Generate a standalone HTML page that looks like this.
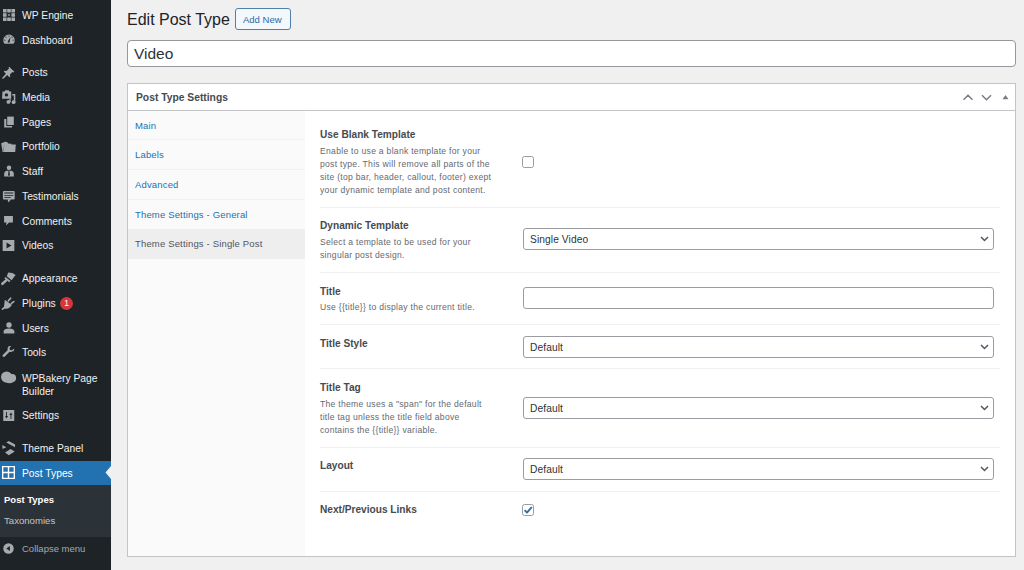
<!DOCTYPE html>
<html><head><meta charset="utf-8">
<style>
*{box-sizing:border-box;margin:0;padding:0}
html,body{width:1024px;height:570px;overflow:hidden;background:#f0f0f1;font-family:"Liberation Sans",sans-serif;color:#3c434a}
.abs{position:absolute}
#side{position:absolute;left:0;top:0;width:111px;height:570px;background:#1d2327}
.mi{position:absolute;left:22px;font-size:10.3px;color:#f0f0f1;white-space:nowrap;line-height:12px}
.ic{position:absolute;left:3px;width:12px;height:12px}
#cur{position:absolute;left:0;top:461px;width:111px;height:24px;background:#2271b1}
#sub{position:absolute;left:0;top:485px;width:111px;height:52px;background:#2c3338}
.t{position:absolute;white-space:nowrap}
.h{font-size:10.15px;line-height:12px;font-weight:bold;color:#454b51}
.cb{position:absolute;left:522px;width:12px;height:12px;border:1px solid #9a9ca1;border-radius:2.5px;background:#fff}
.d{font-size:8.6px;color:#646970;line-height:13px;letter-spacing:0.28px}
.tab{position:absolute;left:135px;font-size:9.5px;letter-spacing:0.16px;color:#2271b1;white-space:nowrap}
.sep{position:absolute;left:320px;width:680px;height:1px;background:#f2f2f3}
.sel{position:absolute;left:523px;width:471px;height:22px;border:1px solid #9a9ca1;border-radius:3px;background:#fff}
.sel span{position:absolute;left:6px;top:5px;font-size:10.2px;line-height:11px;letter-spacing:0.1px;color:#2c3338}
.sel svg{position:absolute;left:455.5px;top:7px}
</style></head><body>
<div id="side">
<svg class="abs" style="left:3px;top:9px" width="12" height="12" viewBox="0 0 20 20" fill="#a7aaad"><path d="M0 0h6v6H0zM7 0h6v6H7zM14 0h6v6h-6zM0 7h6v6H0zM14 7h6v6h-6zM0 14h6v6H0zM7 14h6v6H7zM14 14h6v6h-6z"/><path d="M10 7.3l.9 1.8 1.8.9-1.8.9-.9 1.8-.9-1.8-1.8-.9 1.8-.9z"/></svg>
<svg class="abs" style="left:3px;top:33px" width="12" height="12" viewBox="0 0 20 20" fill="#a7aaad"><path d="M10 2.5A9.5 9.5 0 0 0 .5 12c0 2.2.7 4.2 2 5.8h15c1.3-1.6 2-3.6 2-5.8A9.5 9.5 0 0 0 10 2.5z"/><g fill="#1d2327"><circle cx="10" cy="5" r="1"/><circle cx="5" cy="7" r="1"/><circle cx="15" cy="7" r="1"/><circle cx="3.2" cy="12" r="1"/><circle cx="16.8" cy="12" r="1"/><path d="M12.5 6.5l-1.2 7.2a1.8 1.8 0 1 1-2.8-.9z"/></g></svg>
<svg class="abs" style="left:2px;top:66px" width="13" height="13" viewBox="0 0 20 20" fill="#a7aaad"><path d="M11 1l8 8-1.5 1-1.5-.8-3.8 3.8.5 3-1.4 1.3-3.2-3.3L2 19.5H.5V18l5.5-6.2L2.7 8.5 4 7.2l3 .5 3.8-3.8L10 2.4z"/></svg>
<svg class="abs" style="left:0px;top:86px" width="20" height="20" viewBox="0 0 20 20" fill="#a7aaad"><path d="M2.5 5.5h2l.8-1.2h3.4l.8 1.2h1.7v7.3H2z"/><circle cx="6.4" cy="8.9" r="1.7" fill="#1d2327"/><path d="M12.3 8h3v8.3h-1.5V9.4h-1.5z"/><circle cx="13.6" cy="16.2" r="1.9"/><circle cx="8.4" cy="15.9" r="1.9"/><path d="M9.4 13h1.3v3h-1.3z"/></svg>
<svg class="abs" style="left:3px;top:116px" width="12" height="12" viewBox="0 0 20 20" fill="#a7aaad"><path d="M7 1h11v14H7z"/><path d="M2 5h3.5v11.5H15V19H2z"/></svg>
<svg class="abs" style="left:0px;top:136px" width="20" height="20" viewBox="0 0 20 20" fill="#a7aaad"><path d="M1.2 7.3L5.2 5.8l2.4.4.3 1.4 3.6.2v1.2L4.2 9l-1.2 7h-.4z"/><path d="M4.4 8.6h11.4l-.6 7.4H3.1z"/></svg>
<svg class="abs" style="left:3px;top:165px" width="12" height="12" viewBox="0 0 20 20" fill="#a7aaad"><circle cx="10" cy="4.5" r="3.8"/><path d="M2 19v-4.5C2 11 4.5 9.5 7 9.5h6c2.5 0 5 1.5 5 5V19z"/><path d="M9.2 10h1.6l.8 7-1.6 1.5L8.4 17z" fill="#1d2327"/></svg>
<svg class="abs" style="left:0px;top:190px" width="20" height="20" viewBox="0 0 20 20" fill="#a7aaad"><rect x="2.9" y="1" width="11.8" height="8.4" rx="1"/><path d="M7.6 9.2h3.6l-2.9 3.4z"/><path d="M4.3 2.6h9v.9h-9zM4.3 4.9h9v.9h-9zM4.3 7.2h6.5v.9H4.3z" fill="#1d2327"/></svg>
<svg class="abs" style="left:3px;top:214px" width="11" height="13" viewBox="0 0 20 20" fill="#a7aaad"><path d="M2 2h16v11.5h-7l-5.5 5.5.8-5.5H2z"/></svg>
<svg class="abs" style="left:2px;top:239px" width="13" height="13" viewBox="0 0 20 20" fill="#a7aaad"><path d="M1 1.5h18v17H1z"/><path d="M7 5.5l7.5 4.5L7 14.5z" fill="#1d2327"/></svg>
<svg class="abs" style="left:0px;top:268px" width="20" height="20" viewBox="0 0 20 20" fill="#a7aaad"><path d="M8.2 4.6l4.2.3 3.2 2.2-4 5.2-4.8-4z"/><path d="M5.6 8.9l4.9 4-1.3 1.4-4.9-4z"/><path d="M6.2 12.4L2.4 15.8" stroke="#a7aaad" stroke-width="2.6" stroke-linecap="round"/></svg>
<svg class="abs" style="left:0px;top:296px" width="20" height="20" viewBox="0 0 20 20" fill="#a7aaad"><path d="M4.8 3.8l7.2 5.2-2.6 2.8c-1.6 1-3.6 1-5.6.6z"/><path d="M8.4 4.8l2.2-2.6M11.4 7.4l2.4-1.8" stroke="#a7aaad" stroke-width="1.7" stroke-linecap="round"/><path d="M4.2 11.6l-1.7 1.6" stroke="#a7aaad" stroke-width="1.6" stroke-linecap="round"/></svg>
<svg class="abs" style="left:3px;top:322px" width="12" height="12" viewBox="0 0 20 20" fill="#a7aaad"><circle cx="10" cy="5" r="4.5"/><path d="M1 19v-3c0-3 3.5-5 9-5s9 2 9 5v3z"/></svg>
<svg class="abs" style="left:2px;top:346px" width="13" height="13" viewBox="0 0 20 20" fill="#a7aaad"><path d="M16.7 7.7c-1.4 1.4-3.4 1.8-5.1 1.2L4 16.5a2 2 0 0 1-2.8-2.8l7.6-7.6c-.6-1.8-.2-3.8 1.2-5.2 1.3-1.3 3.1-1.7 4.7-1.3L11.6 2.8l.6 3.3 3.3.6 3-3c.4 1.6 0 3.5-1.8 5z"/></svg>
<svg class="abs" style="left:0px;top:364px" width="20" height="24" viewBox="0 0 20 24" fill="#a7aaad"><circle cx="6.6" cy="13" r="5.6"/><circle cx="12.2" cy="13.9" r="3.9"/><ellipse cx="9.5" cy="16" rx="5" ry="3.2"/></svg>
<svg class="abs" style="left:3px;top:410px" width="11.5" height="11" viewBox="0 0 20 20" fill="#a7aaad"><path d="M0 0h20v20H0z"/><path d="M5.2 3.5h1.6V11h2L6 15.5 3.2 11h2zM13.2 16.5h1.6V9h2L14 4.5 11.2 9h2z" fill="#1d2327"/></svg>
<svg class="abs" style="left:0px;top:436px" width="20" height="20" viewBox="0 0 20 20" fill="#a7aaad"><path d="M6.3 6.5L8.6 5l6.5 3.6-.1 2.6z"/><path d="M2.3 9l4 2.2-3.8 1.8z"/><path d="M5 16.6L10.5 13l4.2 2.6-5.9 3.6z"/></svg>
  <div class="mi" style="top:10px">WP Engine</div>
  <div class="mi" style="top:35px">Dashboard</div>
  <div class="mi" style="top:67px">Posts</div>
  <div class="mi" style="top:92px">Media</div>
  <div class="mi" style="top:117px">Pages</div>
  <div class="mi" style="top:141px">Portfolio</div>
  <div class="mi" style="top:166px">Staff</div>
  <div class="mi" style="top:191px">Testimonials</div>
  <div class="mi" style="top:216px">Comments</div>
  <div class="mi" style="top:240px">Videos</div>
  <div class="mi" style="top:273px">Appearance</div>
  <div class="mi" style="top:298px">Plugins</div>
  <div class="abs" style="left:60px;top:297px;width:13px;height:13px;border-radius:50%;background:#d63638;color:#fff;font-size:8.5px;text-align:center;line-height:13px">1</div>
  <div class="mi" style="top:323px">Users</div>
  <div class="mi" style="top:347px">Tools</div>
  <div class="mi" style="top:372px;line-height:13px">WPBakery Page<br>Builder</div>
  <div class="mi" style="top:410px">Settings</div>
  <div class="mi" style="top:443px">Theme Panel</div>
  <div id="cur"></div>
<svg class="abs" style="left:2px;top:466px" width="13" height="13" viewBox="0 0 20 20" fill="none"><path d="M1 1h18v18H1z" fill="none" stroke="#fff" stroke-width="2.2"/><path d="M10 1v18M1 10h18" stroke="#fff" stroke-width="2.2"/></svg>
  <div class="mi" style="top:468px;color:#fff">Post Types</div>
  <svg class="abs" style="left:105px;top:466px" width="6" height="13" viewBox="0 0 6 13"><path d="M6 0L0.5 6.5 6 13z" fill="#f0f0f1"/></svg>
  <div id="sub"></div>
  <div class="mi" style="top:494px;left:4px;font-size:9.5px;font-weight:bold;color:#fff">Post Types</div>
  <div class="mi" style="top:515px;left:4px;font-size:9.6px;color:#c3c4c7">Taxonomies</div>
<svg class="abs" style="left:3px;top:543px" width="11" height="11" viewBox="0 0 20 20" fill="#a7aaad"><circle cx="10" cy="10" r="9.5"/><path d="M12.5 5.5v9L6 10z" fill="#1d2327"/></svg>
  <div class="mi" style="top:543px;font-size:9.5px;color:#a7aaad">Collapse menu</div>
</div>

<div class="t" style="left:127px;top:11px;font-size:16px;line-height:18px;color:#1d2327">Edit Post Type</div>
<div class="abs" style="left:235px;top:8px;width:56px;height:22px;border:1px solid #4f80aa;border-radius:3px;background:#f3f8fc"></div>
<div class="t" style="left:243px;top:13.5px;font-size:9.5px;line-height:11px;color:#2a6aa3">Add New</div>

<div class="abs" style="left:127px;top:40px;width:889px;height:27px;border:1px solid #94979c;border-radius:4px;background:#fff"></div>
<div class="t" style="left:134px;top:45px;font-size:15.5px;line-height:18px;color:#2c3338">Video</div>

<div class="abs" style="left:127px;top:83px;width:889px;height:474px;border:1px solid #c3c4c7;background:#fff"></div>
<div class="abs" style="left:128px;top:110px;width:887px;height:1px;background:#c3c4c7"></div>
<div class="abs" style="left:128px;top:111px;width:177px;height:445px;background:#fafafa"></div>
<div class="abs" style="left:128px;top:139px;width:177px;height:1px;background:#f0f0f0"></div>
<div class="abs" style="left:128px;top:169px;width:177px;height:1px;background:#f0f0f0"></div>
<div class="abs" style="left:128px;top:199px;width:177px;height:1px;background:#f0f0f0"></div>
<div class="t h" style="left:136px;top:92px;font-size:10.3px">Post Type Settings</div>
<svg class="abs" style="left:962px;top:92px" width="48" height="10" viewBox="0 0 48 10" fill="none" stroke="#787c82" stroke-width="1.5"><path d="M1.5 7.8L6 3.3l4.5 4.5M20 3.3l4.5 4.5L29 3.3"/><path d="M40.5 7.2l3-4.2 3 4.2z" fill="#787c82" stroke="none"/></svg>

<div class="tab" style="top:120px">Main</div>
<div class="tab" style="top:149px">Labels</div>
<div class="tab" style="top:179px">Advanced</div>
<div class="tab" style="top:209px">Theme Settings - General</div>
<div class="abs" style="left:128px;top:229px;width:177px;height:30px;background:#eeeeee"></div>
<div class="tab" style="top:238px;color:#50575e">Theme Settings - Single Post</div>

<div class="t h" style="left:320px;top:129px">Use Blank Template</div>
<div class="t d" style="left:320px;top:145px">Enable to use a blank template for your<br>post type. This will remove all parts of the<br>site (top bar, header, callout, footer) exept<br>your dynamic template and post content.</div>
<div class="cb" style="top:156px"></div>
<div class="sep" style="top:207px"></div>

<div class="t h" style="left:320px;top:220px">Dynamic Template</div>
<div class="t d" style="left:320px;top:236px">Select a template to be used for your<br>singular post design.</div>
<div class="sel" style="top:228px"><span>Single Video</span><svg width="9" height="6" viewBox="0 0 9 6" fill="none" stroke="#50575e" stroke-width="1.5"><path d="M1 1l3.5 3.5L8 1"/></svg></div>
<div class="sep" style="top:272px"></div>

<div class="t h" style="left:320px;top:286px">Title</div>
<div class="t d" style="left:320px;top:301px">Use {{title}} to display the current title.</div>
<div class="sel" style="top:287px;height:22px"></div>
<div class="sep" style="top:324px"></div>

<div class="t h" style="left:320px;top:338px">Title Style</div>
<div class="sel" style="top:336px"><span>Default</span><svg width="9" height="6" viewBox="0 0 9 6" fill="none" stroke="#50575e" stroke-width="1.5"><path d="M1 1l3.5 3.5L8 1"/></svg></div>
<div class="sep" style="top:368px"></div>

<div class="t h" style="left:320px;top:382px">Title Tag</div>
<div class="t d" style="left:320px;top:398px">The theme uses a "span" for the default<br>title tag unless the title field above<br>contains the {{title}} variable.</div>
<div class="sel" style="top:397px"><span>Default</span><svg width="9" height="6" viewBox="0 0 9 6" fill="none" stroke="#50575e" stroke-width="1.5"><path d="M1 1l3.5 3.5L8 1"/></svg></div>
<div class="sep" style="top:447px"></div>

<div class="t h" style="left:320px;top:460px">Layout</div>
<div class="sel" style="top:458px"><span>Default</span><svg width="9" height="6" viewBox="0 0 9 6" fill="none" stroke="#50575e" stroke-width="1.5"><path d="M1 1l3.5 3.5L8 1"/></svg></div>
<div class="sep" style="top:491px"></div>

<div class="t h" style="left:320px;top:504px">Next/Previous Links</div>
<div class="cb" style="top:504px"><svg style="position:absolute;left:0px;top:0px" width="10" height="10" viewBox="0 0 10 10" fill="none" stroke="#2f6fa6" stroke-width="1.9" stroke-linejoin="round"><path d="M1.6 5.2L4 7.6 8.8 2"/></svg></div>

</body></html>
